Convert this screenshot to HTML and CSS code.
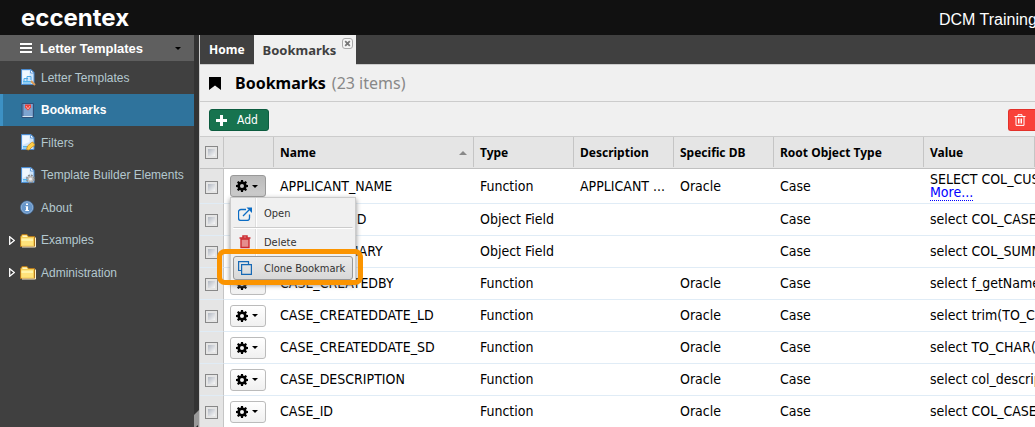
FILE: index.html
```html
<!DOCTYPE html>
<html lang="en">
<head>
<meta charset="utf-8">
<title>Bookmarks</title>
<link rel="stylesheet" href="styles.css">
</head>
<body>
<svg class="defs" aria-hidden="true">
  <symbol id="gear" viewBox="0 0 12 12"><path fill-rule="evenodd" d="M5 0h2l.3 1.700.9.400L9.700 1.100 11 2.400l-1 1.400.4.900L12 5v2l-1.600.3-.4.900 1 1.400-1.300 1.300-1.500-1-.9.4L7 12H5l-.3-1.700-.9-.4-1.500 1L1 9.600l1-1.400-.4-.9L0 7V5l1.600-.3.400-.9-1-1.400 1.300-1.300 1.500 1 .9-.4zM6 4a2 2 0 100 4 2 2 0 000-4z"/></symbol>
  <symbol id="page" viewBox="0 0 16 17"><path d="M1.500.500h9.500l3 3v12H1.500z" fill="#cfe5fb" stroke="#4b8bd0"/><path d="M2.500 2h7v6l-7 3z" fill="#eff7ff"/><path d="M10.500.500v3.500H14z" fill="#fff" stroke="#4b8bd0" stroke-width=".8"/><path d="M3 12.500h8M3 14h8" stroke="#52b5ee"/></symbol>
  <symbol id="folder" viewBox="0 0 16 14"><path d="M.5 3.500L2 1h5l1.500 2h6v10H.500z" fill="#f3cd55" stroke="#b5791d"/><path d="M2.500 3.500V2h4l1 1.500z" fill="#fff4c3"/><path d="M1.500 5h11.500v7H1.500z" fill="#ffe27b"/><path d="M1.500 5h11.500v2.500H1.500z" fill="#fff3a8"/><path d="M15.500 4v9.500H2" fill="none" stroke="#fff2cd"/></symbol>
  <symbol id="twist" viewBox="0 0 6 9"><path d="M.7.800L5.300 4.500.7 8.200z" fill="#333" stroke="#fff" stroke-width="1.300"/></symbol>
  <symbol id="bin" viewBox="0 0 12 12"><path d="M.5 2.500h11M4 2V.700h4V2M2 3v8.400h8V3M4.500 4.500v5M6 4.500v5M7.500 4.500v5" fill="none" stroke="currentColor"/></symbol>
</svg>
<header class="top">
  <div class="brand">eccentex</div>
  <div class="account">DCM Training</div>
</header>
<div class="shell">
  <nav class="side">
    <button class="side-head"><svg width="12" height="10" viewBox="0 0 12 10"><path d="M0 1h12M0 5h12M0 9h12" stroke="#fff" stroke-width="2"/></svg><span>Letter Templates</span><i class="caret"></i></button>
    <ul class="side-list">
      <li><a href="#"><svg class="ico" viewBox="0 0 16 17"><use href="#page"/><path d="M4 12V9.500h4M7 12V7.500h4V11" fill="none" stroke="#4fa9e5"/><path d="M11 12l4 4" stroke="#d99a56" stroke-width="2"/></svg>Letter Templates</a></li>
      <li class="current"><a href="#"><svg class="ico" viewBox="0 0 16 17"><path d="M2 1.500h11.500v14H2z" fill="#6488b4" stroke="#315078"/><path d="M4 2h8.500v12H4z" fill="#7ea4cf"/><path d="M2.500 14.500h10" stroke="#d5e3ef"/><path d="M5 2.500h6v3L8 8.500l-3-3z" fill="#ef3f37"/><path d="M6 4l2 3 2-3" fill="none" stroke="#ffaba4"/></svg>Bookmarks</a></li>
      <li><a href="#"><svg class="ico" viewBox="0 0 16 17"><use href="#page"/><path d="M6.500 15.500l1-3.500 4-3.500 1.500-.5.500 1.500 1 .5-.5 2-2 1-3 3z" fill="#ffcf48" stroke="#c88b21" stroke-width=".8"/></svg>Filters</a></li>
      <li><a href="#"><svg class="ico" viewBox="0 0 16 17"><use href="#page"/><circle cx="10.500" cy="12" r="3" fill="none" stroke="#888" stroke-width="3" stroke-dasharray="1.500 .85"/><circle cx="10.500" cy="12" r="2.300" fill="#eee" stroke="#bbb" stroke-width="1.500"/></svg>Template Builder Elements</a></li>
      <li><a href="#"><svg class="ico" viewBox="0 0 16 17"><circle cx="7" cy="8.500" r="6" fill="#6797cb" stroke="#aac5e3"/><circle cx="7" cy="8.500" r="6.600" fill="none" stroke="#386ca6" stroke-width=".7"/><path d="M6 4.500h2v1.600H6zM5.500 7.200H8v3.800h1v1H5.300v-1H6V8h-.5z" fill="#fff"/></svg>About</a></li>
      <li><a href="#"><svg class="twist"><use href="#twist"/></svg><svg class="ico"><use href="#folder"/></svg>Examples</a></li>
      <li><a href="#"><svg class="twist"><use href="#twist"/></svg><svg class="ico"><use href="#folder"/></svg>Administration</a></li>
    </ul>
  </nav>
  <div class="splitter"><svg width="5" height="18" viewBox="0 0 5 18"><path d="M0 5l5-5v18H0z" fill="#999"/><path d="M1 18l3-3v3z" fill="#222"/></svg></div>
  <main class="main">
    <div class="tabs">
      <a class="tab home" href="#">Home</a>
      <a class="tab open" href="#">Bookmarks</a>
      <button class="close" aria-label="Close tab"><svg width="11" height="11" viewBox="0 0 11 11"><rect x=".5" y=".5" width="10" height="10" rx="2.500" fill="#f5f5f5" stroke="#aaa"/><path d="M3.200 3.200l4.600 4.600M7.800 3.200L3.200 7.800" stroke="#777" stroke-width="1.800"/></svg></button>
    </div>
    <div class="title">
      <svg width="12" height="13" viewBox="0 0 12 13"><path d="M0 0h12v13L6 8.500 0 13z"/></svg>
      <h1>Bookmarks</h1><span class="count">(23 items)</span>
    </div>
    <div class="toolbar">
      <button class="add"><svg width="11" height="11" viewBox="0 0 11 11"><path d="M5.500 0v11M0 5.500h11" stroke="#fff" stroke-width="3"/></svg>Add</button>
      <button class="remove" aria-label="Delete"><svg width="12" height="12"><use href="#bin"/></svg></button>
    </div>
    <table class="grid">
      <colgroup><col class="c-check"><col class="c-act"><col class="c-name"><col class="c-std"><col class="c-std"><col class="c-std"><col class="c-root"><col></colgroup>
      <thead><tr>
        <th><input type="checkbox" aria-label="Select all"></th><th></th>
        <th><div class="sorted">Name<i></i></div></th><th>Type</th><th>Description</th><th>Specific DB</th><th>Root Object Type</th><th>Value</th>
      </tr></thead>
      <tbody>
        <tr class="first">
          <td><input type="checkbox" aria-label="Select APPLICANT_NAME"></td>
          <td class="act">
            <button class="gear pressed" aria-label="Actions"><svg><use href="#gear"/></svg><i class="caret"></i></button>
            <div class="menu">
              <button class="item open-item"><svg width="14" height="14" viewBox="0 0 14 14"><path d="M8 2.500H3A2.500 2.500 0 00.500 5v6A2.500 2.500 0 003 13.500h6a2.500 2.500 0 002.500-2.500V7.500M5 9l6-6" fill="none" stroke="#0b6cc4" stroke-width="1.300"/><path d="M8.500.500H14V6z" fill="#0b6cc4"/></svg><span>Open</span></button>
              <button class="item"><svg width="14" height="14" viewBox="0 0 14 14"><path d="M3 4h8v8.500H3z" fill="#e58d8d" stroke="#cc2a2f" stroke-width="1.400"/><path d="M1.500 3h11M5 2.500V1h4v1.500" fill="none" stroke="#cc2a2f" stroke-width="1.500"/></svg><span>Delete</span></button>
              <button class="item hot"><svg width="14" height="14" viewBox="0 0 14 14"><path d="M3 9.500H.600V.600h9.900V3M3.600 3.600h9.800v9.800H3.600z" fill="none" stroke="#1769b5" stroke-width="1.200"/></svg><span>Clone Bookmark</span></button>
            </div>
            <div class="callout"></div>
          </td>
          <td>APPLICANT_NAME</td><td>Function</td><td>APPLICANT ...</td><td>Oracle</td><td>Case</td>
          <td class="long">SELECT COL_CUS<br><a class="more" href="#">More...</a></td>
        </tr>
        <tr><td><input type="checkbox" aria-label="Select CASE_CASEID"></td><td><button class="gear" aria-label="Actions"><svg><use href="#gear"/></svg><i class="caret"></i></button></td><td>CASE_CASEID</td><td>Object Field</td><td></td><td></td><td>Case</td><td>select COL_CASE</td></tr>
        <tr><td><input type="checkbox" aria-label="Select CASE_SUMMARY"></td><td><button class="gear" aria-label="Actions"><svg><use href="#gear"/></svg><i class="caret"></i></button></td><td>CASE_SUMMARY</td><td>Object Field</td><td></td><td></td><td>Case</td><td>select COL_SUMM</td></tr>
        <tr><td><input type="checkbox" aria-label="Select CASE_CREATEDBY"></td><td><button class="gear" aria-label="Actions"><svg><use href="#gear"/></svg><i class="caret"></i></button></td><td>CASE_CREATEDBY</td><td>Function</td><td></td><td>Oracle</td><td>Case</td><td>select f_getName</td></tr>
        <tr><td><input type="checkbox" aria-label="Select CASE_CREATEDDATE_LD"></td><td><button class="gear" aria-label="Actions"><svg><use href="#gear"/></svg><i class="caret"></i></button></td><td>CASE_CREATEDDATE_LD</td><td>Function</td><td></td><td>Oracle</td><td>Case</td><td>select trim(TO_CH</td></tr>
        <tr><td><input type="checkbox" aria-label="Select CASE_CREATEDDATE_SD"></td><td><button class="gear" aria-label="Actions"><svg><use href="#gear"/></svg><i class="caret"></i></button></td><td>CASE_CREATEDDATE_SD</td><td>Function</td><td></td><td>Oracle</td><td>Case</td><td>select TO_CHAR(</td></tr>
        <tr><td><input type="checkbox" aria-label="Select CASE_DESCRIPTION"></td><td><button class="gear" aria-label="Actions"><svg><use href="#gear"/></svg><i class="caret"></i></button></td><td>CASE_DESCRIPTION</td><td>Function</td><td></td><td>Oracle</td><td>Case</td><td>select col_descrip</td></tr>
        <tr><td><input type="checkbox" aria-label="Select CASE_ID"></td><td><button class="gear" aria-label="Actions"><svg><use href="#gear"/></svg><i class="caret"></i></button></td><td>CASE_ID</td><td>Function</td><td></td><td>Oracle</td><td>Case</td><td>select COL_CASE</td></tr>
      </tbody>
    </table>
  </main>
</div>
</body>
</html>
```
FILE: styles.css
```css
* { box-sizing: border-box; }
body {
  margin: 0;
  min-height: 100vh;
  display: flex;
  flex-direction: column;
  overflow: hidden;
  font-family: "DejaVu Sans Condensed", "DejaVu Sans", sans-serif;
  font-size: 13px;
  color: #000;
}
button { margin: 0; padding: 0; border: 0; background: none; font: inherit; color: inherit; }
a { color: inherit; text-decoration: none; }
svg { display: block; flex: none; }
.defs { position: absolute; width: 0; height: 0; }

.top {
  display: flex;
  justify-content: space-between;
  align-items: center;
  height: 35px;
  padding-left: 21px;
  background: #111;
  color: #fff;
}
.brand { font: 700 24px/32px Inter, sans-serif; }
.account { width: 96px; padding-top: 4px; font: 16px/20px "Liberation Sans", sans-serif; white-space: nowrap; }

.shell { display: flex; flex: 1; }
.side { flex: 0 0 194px; background: #404040; font-family: "Liberation Sans", sans-serif; }
.side-head {
  display: flex;
  align-items: center;
  width: 100%;
  height: 26px;
  padding: 0 13px 0 20px;
  gap: 8px;
  background: #5f5f5f;
  color: #fff;
  font-weight: bold;
  text-align: left;
}
.side-head span { flex: 1; }
.caret { border: solid transparent; border-width: 3px 3px 0; border-top-color: #000; }
.side-list { margin: 0; padding: 0; list-style: none; font-size: 12px; color: #b4c8cf; }
.side-list li { height: 32px; }
.side-list li:nth-child(odd) { height: 33px; }
.side-list a { display: flex; align-items: center; justify-content: flex-start; height: 100%; padding-left: 20px; }
.side-list .current { background: #2f739c; border-left: 3px solid #3d91c4; color: #fff; font-weight: bold; }
.side-list .current a { padding-left: 17px; }
.ico { width: 16px; height: 17px; margin-right: 5px; }
.twist { width: 6px; height: 9px; margin: 0 5px 0 -11px; }
.splitter { display: flex; align-items: flex-end; flex: 0 0 5px; background: #333; }

.main { flex: 1; min-width: 0; background: #f0f0f0; border-left: 1px solid #ccc; }
.tabs { display: flex; height: 30px; background: #404040; border-bottom: 1px solid #ccc; font: bold 13px/30px "Noto Sans", sans-serif; color: #fff; }
.tab { padding: 0 9px; }
.tab.home { font-size: 12px; }
.tab.open { width: 102px; height: 30px; background: #f0f0f0; color: #404040; }
.close { align-self: flex-start; margin: 3px 0 0 -14px; }
.title { display: flex; align-items: center; height: 37px; padding: 0 9px; border-bottom: 1px solid #ccc; font: 16px/22px "Noto Sans", sans-serif; }
.title h1 { margin: 0 6px 0 14px; font-size: 16px; }
.count { color: #888; }
.toolbar { display: flex; justify-content: space-between; padding: 7px 0 5px 9px; }
.add { display: flex; align-items: center; width: 60px; height: 22px; padding-left: 6px; gap: 10px; border: 1px solid #0c5c3f; border-radius: 3px; background: #17734f; color: #fff; font-size: 12px; }
.remove { width: 27px; height: 22px; padding-left: 5px; border: 1px solid #e2312a; border-right: 0; border-radius: 3px 0 0 3px; background: #f9423a; color: #fff; }

.grid { width: 100%; table-layout: fixed; border-collapse: separate; border-spacing: 0; background: #fff; font-size: 14px; line-height: 17px; }
.c-check { width: 24px; }
.c-act { width: 50px; }
.c-name { width: 200px; }
.c-std { width: 100px; }
.c-root { width: 150px; }
.grid th, .grid td { padding: 0 0 0 6px; text-align: left; white-space: nowrap; }
.grid th { height: 33px; background: linear-gradient(#c5c5c5, #c5c5c5) right top / 1px 30px no-repeat #e5e5e5; border-top: 1px solid #ccc; border-bottom: 1px solid #c0c0c0; font: bold 12px/16px "Noto Sans", sans-serif; }
.grid td { height: 32px; border-bottom: 1px solid #e0ecf6; }
.grid .first td { height: 35px; }
.grid td:last-child { overflow: hidden; }
.grid th:first-child { padding-left: 5px; }
.grid td:first-child { padding: 2px 0 0 5px; background: #e5e5e5; border-right: 1px solid #c5c5c5; }
.grid input { display: block; appearance: none; width: 13px; height: 13px; margin: 0; border: 1px solid #888; background: linear-gradient(135deg, #b2b8c2, #f8f8f8) content-box #f4f4f4; padding: 2px; }
.sorted { display: flex; align-items: center; justify-content: space-between; padding-right: 7px; }
.sorted i { border: solid transparent; border-width: 0 4px 4px; border-bottom-color: #888; }
.grid .long { line-height: 13px; }
.more { color: #00f; border-bottom: 1px dotted #00f; }
.gear { display: flex; align-items: center; width: 36px; height: 22px; padding-left: 5px; gap: 4px; border: 1px solid #bbb; border-radius: 3px; background: linear-gradient(#fff, #f0f0f0); }
.gear svg { width: 12px; height: 12px; }
.gear.pressed { border-color: #999; background: linear-gradient(#bbb, #ccc); }
.act { position: relative; }
.menu { position: absolute; z-index: 1; top: 28px; left: 6px; width: 126px; padding: 1px 2px 2px; border: 1px solid #ccc; background: linear-gradient(90deg, transparent 24px, #ddd 24px, #ddd 25px, #fff 25px, #fff 26px, transparent 26px) #f0f0f0; box-shadow: 0 2px 5px #888; font-size: 11px; color: #333; }
.item { display: flex; align-items: center; width: 100%; height: 28px; padding-left: 4px; gap: 12px; border: 1px solid transparent; }
.open-item { height: 29px; border-bottom-color: #ccc; box-shadow: 0 1px #fff; }
.item.hot { height: 24px; border-color: #999; border-radius: 3px; background: linear-gradient(#eaeaea, #d8d8d8); }
.callout { position: absolute; z-index: 2; top: 80px; left: -7px; width: 146px; height: 36px; border: 5px solid #fb9400; border-radius: 8px; pointer-events: none; }
```
